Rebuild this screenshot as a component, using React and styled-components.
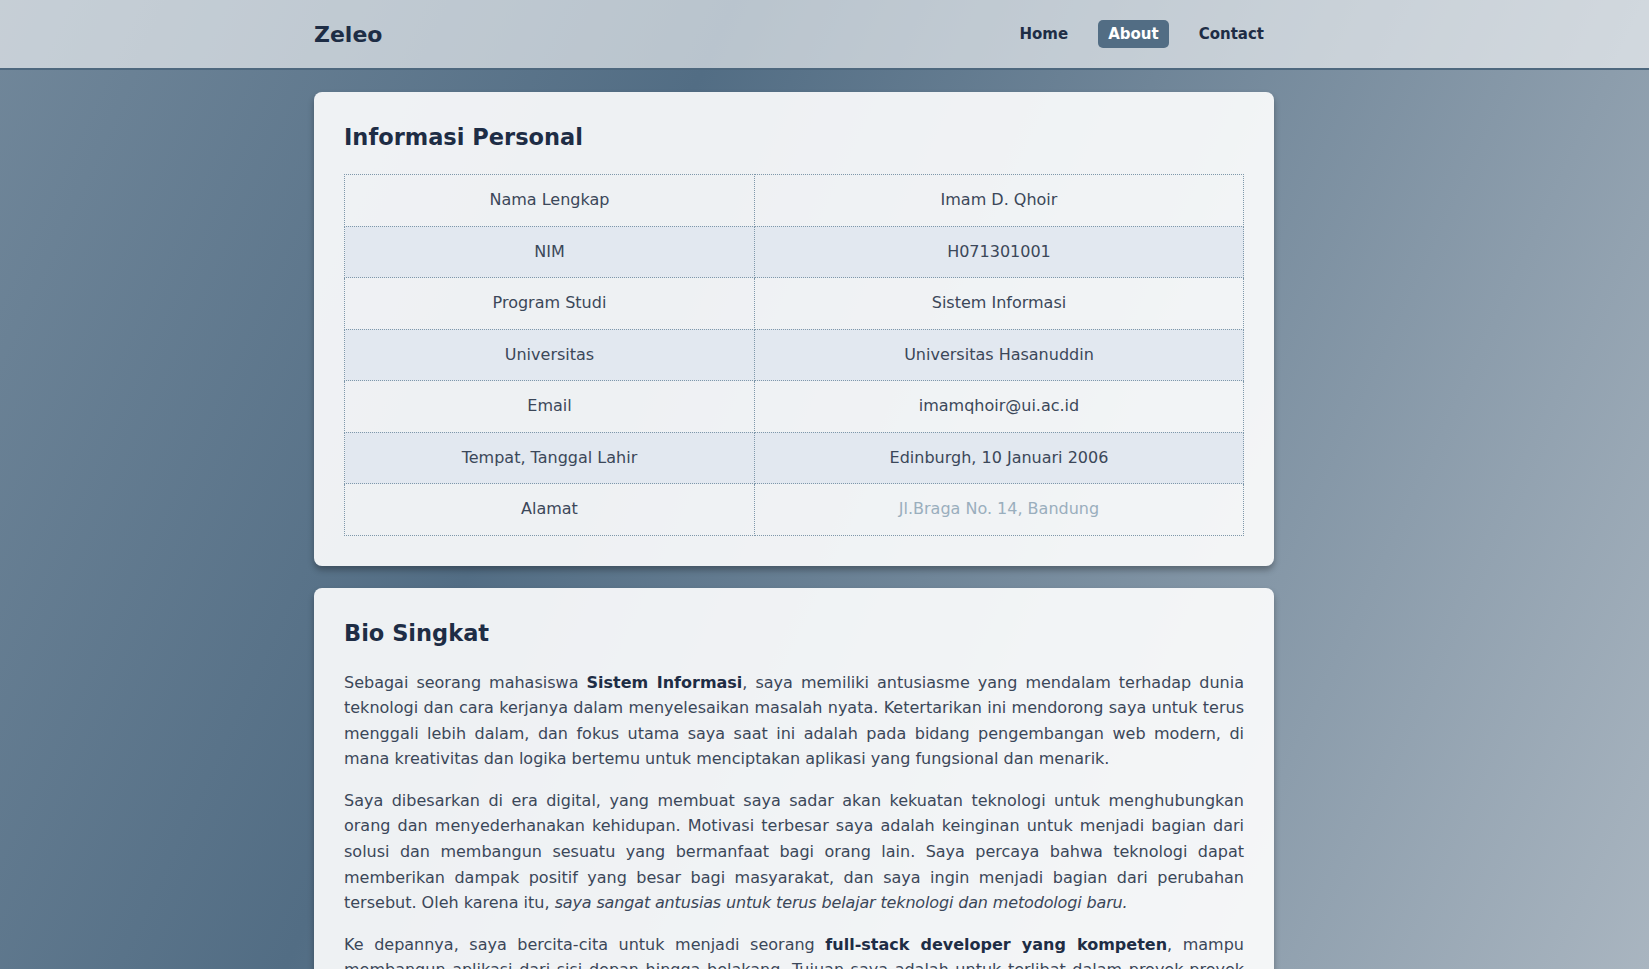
import React from 'react'
import styled, { createGlobalStyle } from 'styled-components'

const GlobalStyle = createGlobalStyle`
  html, body {
    margin: 0;
    padding: 0;
  }
  body {
    font-family: "DejaVu Sans", "Liberation Sans", sans-serif;
    color: #334155;
    background: linear-gradient(115deg, #71879a 0%, #526d84 35%, #a9b5c0 100%);
    background-attachment: fixed;
    min-height: 100vh;
  }
`

const personal = [
  ['Nama Lengkap', 'Imam D. Qhoir'],
  ['NIM', 'H071301001'],
  ['Program Studi', 'Sistem Informasi'],
  ['Universitas', 'Universitas Hasanuddin'],
  ['Email', 'imamqhoir@ui.ac.id'],
  ['Tempat, Tanggal Lahir', 'Edinburgh, 10 Januari 2006'],
  ['Alamat', 'Jl.Braga No. 14, Bandung', true],
]

const App = () => {
  return (
    <>
      <GlobalStyle />
      <Header>
        <HeaderInner>
          <Logo>Zeleo</Logo>
          <Nav>
            <NavLink>Home</NavLink>
            <NavLink active>About</NavLink>
            <NavLink>Contact</NavLink>
          </Nav>
        </HeaderInner>
      </Header>
      <Main>
        <Container>
          <Card>
            <CardTitle>Informasi Personal</CardTitle>
            <Table>
              <colgroup>
                <col style={{ width: '45.6%' }} />
                <col />
              </colgroup>
              <tbody>
                {personal.map(([label, value, muted]) => (
                  <tr key={label}>
                    <Cell>{label}</Cell>
                    <Cell muted={muted}>{value}</Cell>
                  </tr>
                ))}
              </tbody>
            </Table>
          </Card>

          <Card>
            <CardTitle>Bio Singkat</CardTitle>
            <Paragraph>
              Sebagai seorang mahasiswa <strong>Sistem Informasi</strong>, saya memiliki antusiasme yang mendalam terhadap dunia teknologi dan cara kerjanya dalam menyelesaikan masalah nyata. Ketertarikan ini mendorong saya untuk terus menggali lebih dalam, dan fokus utama saya saat ini adalah pada bidang pengembangan web modern, di mana{'\u00A0'}kreativitas dan logika bertemu untuk menciptakan aplikasi yang fungsional dan menarik.
            </Paragraph>
            <Paragraph>
              Saya dibesarkan di era digital, yang membuat saya sadar akan kekuatan teknologi untuk menghubungkan orang dan menyederhanakan kehidupan. Motivasi terbesar saya adalah keinginan untuk menjadi bagian dari solusi dan membangun sesuatu yang bermanfaat bagi orang lain. Saya percaya bahwa teknologi dapat memberikan dampak positif yang besar bagi masyarakat, dan saya ingin menjadi bagian dari perubahan tersebut. Oleh karena itu, <em>saya sangat antusias untuk terus belajar teknologi dan metodologi baru.</em>
            </Paragraph>
            <Paragraph>
              Ke depannya, saya bercita-cita untuk menjadi seorang <strong>full-stack developer yang kompeten</strong>, mampu membangun aplikasi dari sisi depan hingga belakang. Tujuan saya adalah untuk terlibat dalam proyek-proyek yang menantang dan memberikan kontribusi nyata bagi tim serta pengguna.
            </Paragraph>
          </Card>
        </Container>
      </Main>
    </>
  )
}

const Header = styled.header`
  background: rgba(255, 255, 255, 0.6);
  border-bottom: 2px solid #4e687e;
  padding-right: 61px;
`

const HeaderInner = styled.div`
  max-width: 960px;
  height: 68px;
  margin: 0 auto;
  display: flex;
  align-items: center;
  justify-content: space-between;
`

const Logo = styled.div`
  font-size: 22px;
  font-weight: 700;
  color: #1e2d45;
`

const Nav = styled.nav`
  display: flex;
  align-items: center;
  gap: 20px;
`

const NavLink = styled.a`
  font-size: 15px;
  font-weight: 700;
  line-height: 18px;
  padding: 5px 10px;
  border-radius: 5px;
  color: ${p => (p.active ? '#ffffff' : '#1e2d45')};
  background: ${p => (p.active ? '#526d84' : 'transparent')};
  cursor: pointer;
`

const Main = styled.main`
  padding: 22px 61px 40px 0;
`

const Container = styled.div`
  max-width: 960px;
  margin: 0 auto;
  display: flex;
  flex-direction: column;
  gap: 22px;
`

const Card = styled.section`
  background: rgba(255, 255, 255, 0.9);
  border-radius: 8px;
  padding: 30px;
  box-shadow: 0 4px 6px rgba(0, 0, 0, 0.3);
`

const CardTitle = styled.h2`
  margin: 0 0 22px;
  font-size: 22.5px;
  line-height: 30px;
  font-weight: 700;
  color: #1e2d45;
`

const Table = styled.table`
  width: 100%;
  margin-top: 6px;
  border-collapse: collapse;
  table-layout: fixed;
  border: 1px dotted #7f98aa;

  tr:nth-child(even) {
    background: #e2e8f0;
  }
`

const Cell = styled.td`
  border: 1px dotted #7f98aa;
  padding: 15px;
  text-align: center;
  font-size: 16px;
  line-height: 20.5px;
  color: ${p => (p.muted ? '#9aaebd' : '#3b4759')};
`

const Paragraph = styled.p`
  margin: 0 0 16px;
  font-size: 16px;
  line-height: 1.6;
  text-align: justify;
  color: #3b4759;

  strong {
    color: #1e2d45;
  }

  em {
    letter-spacing: -0.15px;
  }
`

export default App
